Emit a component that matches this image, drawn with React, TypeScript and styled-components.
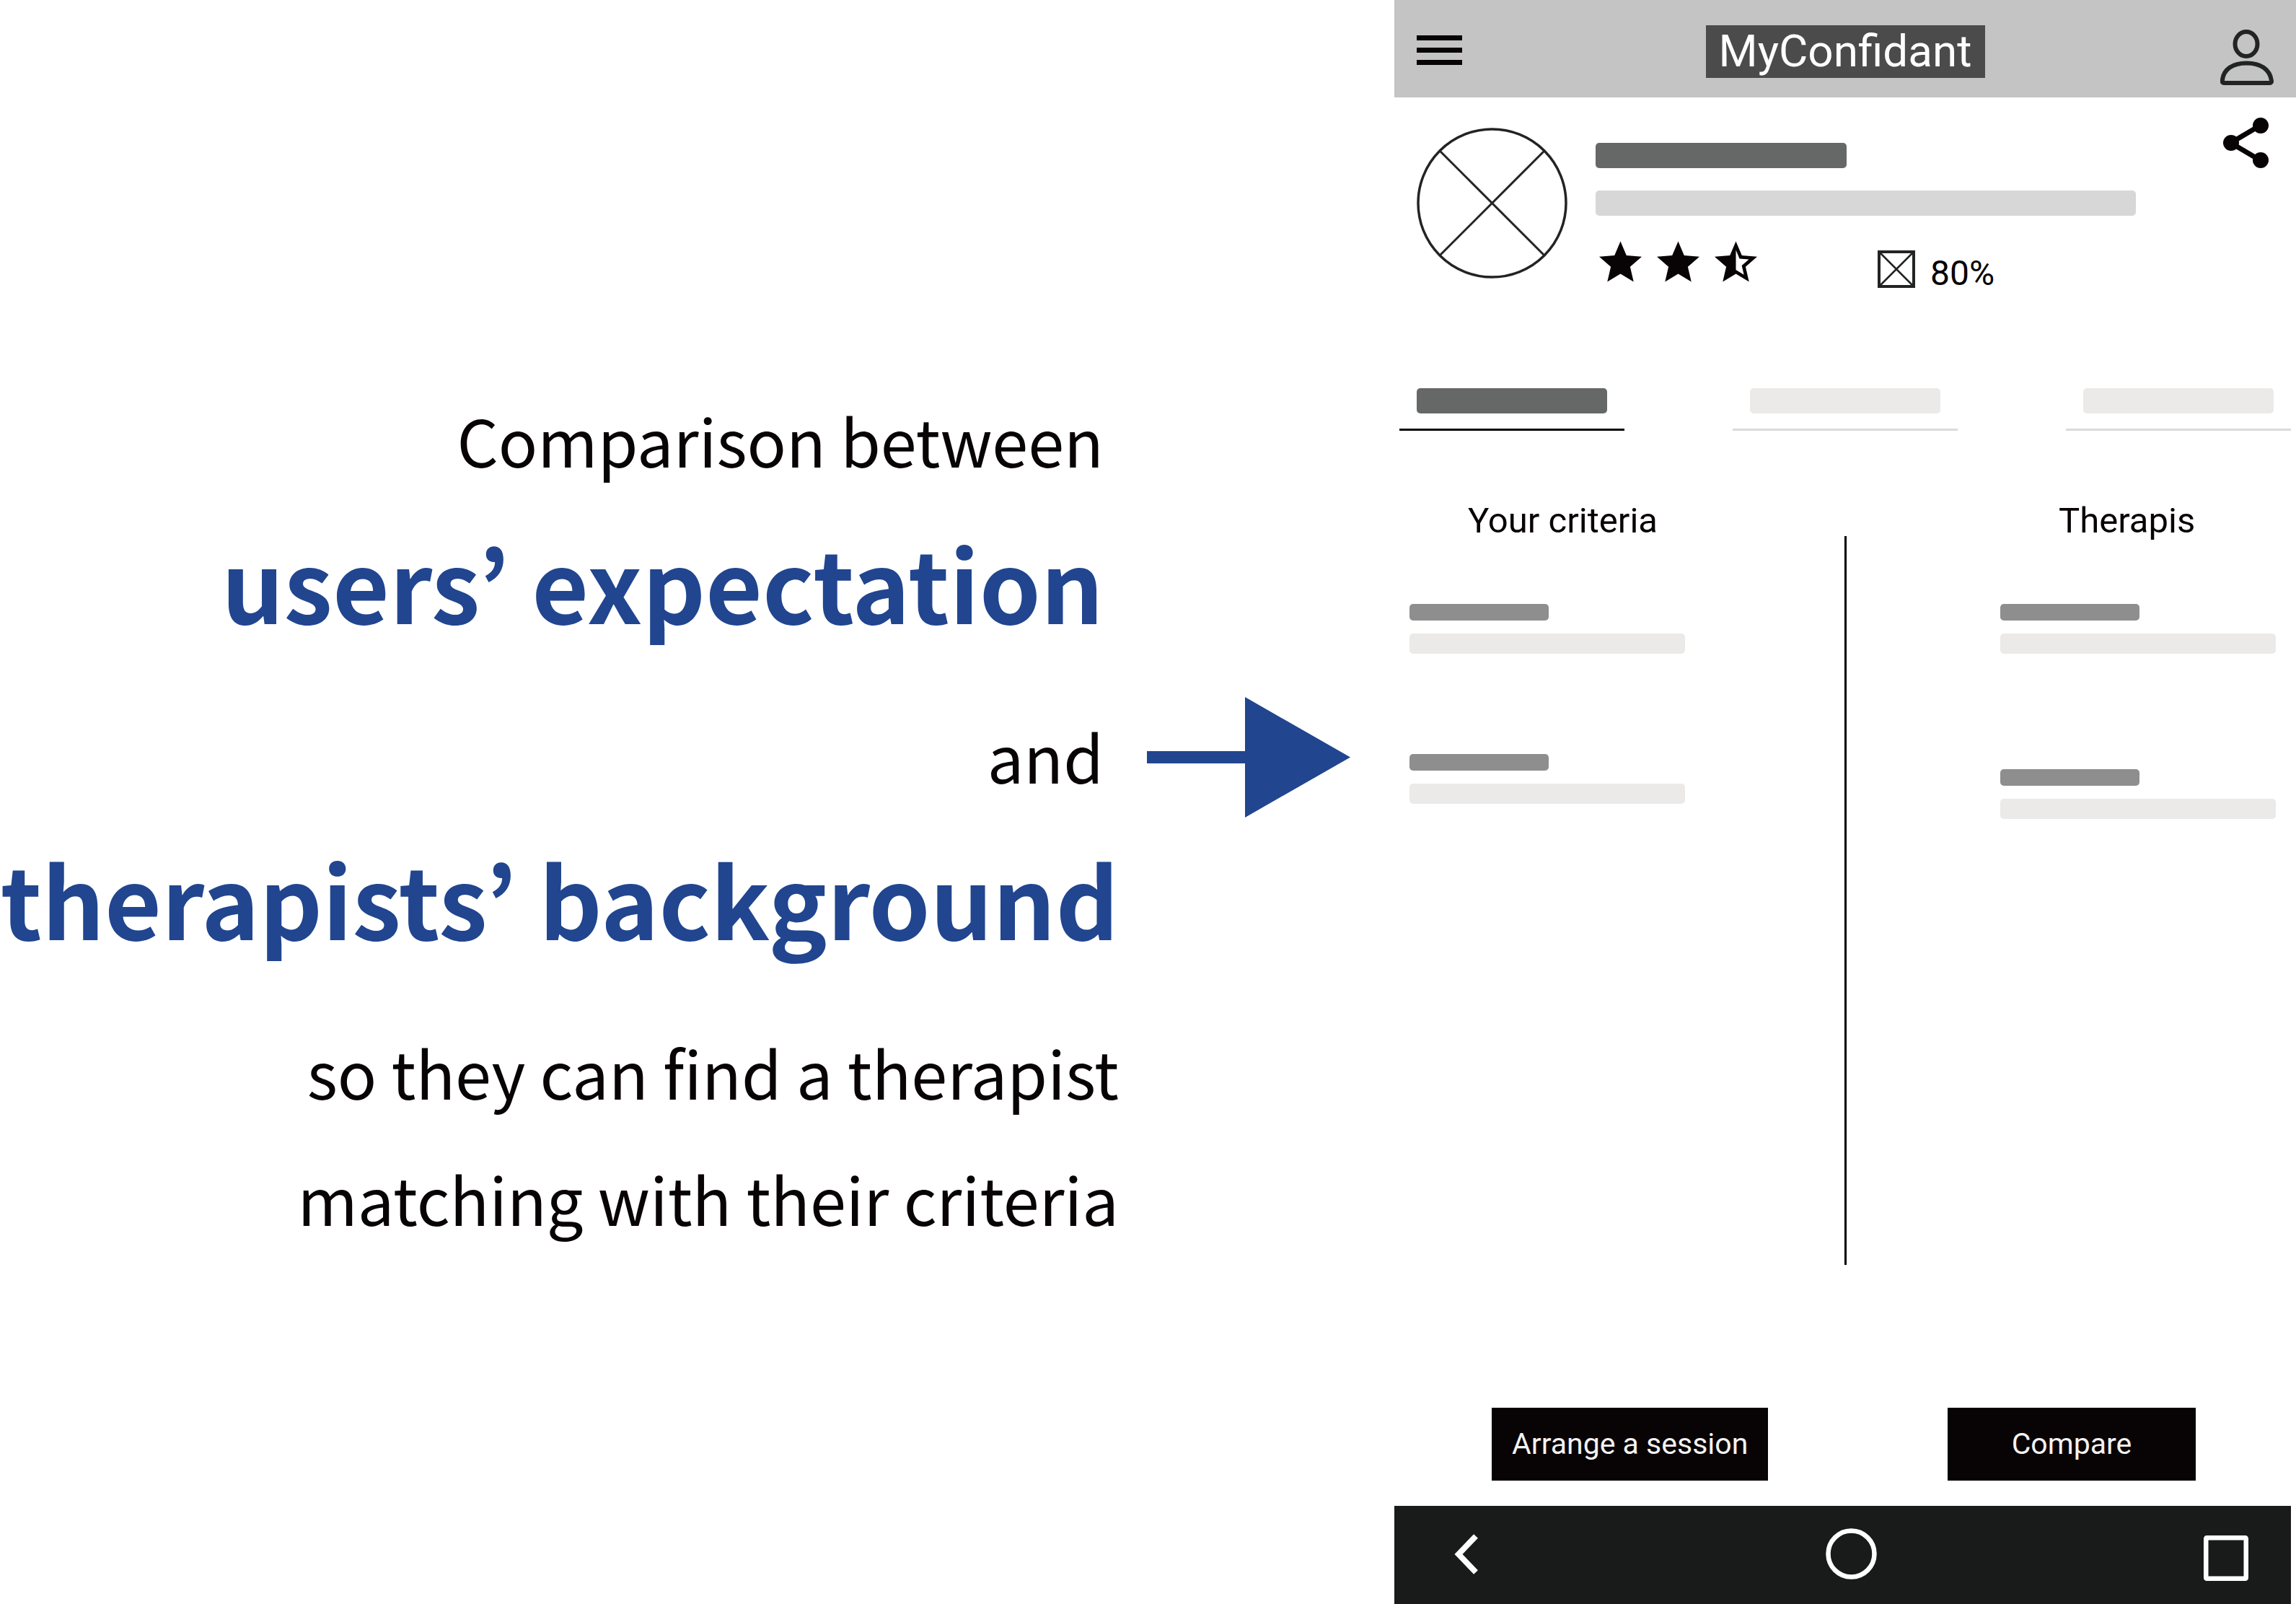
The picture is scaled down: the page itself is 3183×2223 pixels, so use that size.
import React from "react";
import styled, { createGlobalStyle } from "styled-components";

const INK = "#080304";
const BLUE = "#21458f";

const GlobalStyle = createGlobalStyle`
  *, *::before, *::after { box-sizing: border-box; }
  body {
    margin: 0;
    background: #fff;
    color: ${INK};
    font-family: Roboto, "Liberation Sans", sans-serif;
  }
  button {
    margin: 0;
    padding: 0;
    border: 0;
    background: none;
    color: inherit;
    font: inherit;
    cursor: pointer;
  }
  svg { display: block; }
`;

const Page = styled.div`
  display: grid;
  grid-template-columns: minmax(0, 1551fr) minmax(0, 382fr) minmax(0, 1250fr);
  min-height: 100vh;
`;

/* Statement on the left */

const Statement = styled.section`
  padding-top: 522px;
  font-family: "Noto Sans CJK KR", "Noto Sans", sans-serif;
  text-align: right;
  white-space: nowrap;
`;

const Clause = styled.div<{ $inset?: number }>`
  display: flex;
  flex-direction: column;
  align-items: flex-end;
  padding-right: ${({ $inset = 0 }) => $inset}px;
`;

const Line = styled.p`
  margin: 0;
  font-size: 90px;
  line-height: 175px;
`;

const KeyLine = styled.p`
  margin: 0 0 46px;
  color: ${BLUE};
  font-size: 136px;
  font-weight: 700;
  line-height: 217px;
`;

const Pointer = styled.div`
  display: flex;
  justify-content: flex-start;
  padding: 966px 0 0 39px;
`;

/* Phone mock-up */

const Phone = styled.div`
  display: flex;
  flex-direction: column;
`;

const AppBar = styled.header`
  display: grid;
  grid-template-columns: 1fr auto 1fr;
  align-items: center;
  height: 135px;
  padding: 8px 31px 0;
  background: #c4c4c4;
`;

const AppTitle = styled.h1`
  margin: 0;
  padding: 0 18px 2px;
  background: #4b4b4b;
  color: #fff;
  font-size: 62px;
  font-weight: 400;
  line-height: 71px;
`;

const BarButton = styled.button<{ $end?: boolean }>`
  justify-self: ${({ $end }) => ($end ? "end" : "start")};
  padding: ${({ $end }) => ($end ? "16px 0 0" : "0 0 4px")};
`;

const Main = styled.main`
  display: flex;
  flex: 1;
  flex-direction: column;
`;

const Profile = styled.section`
  display: flex;
  align-items: flex-start;
  height: 403px;
  padding: 28px 38px 0 31px;
`;

const Avatar = styled.div`
  flex: none;
  margin: 14px 39px 0 0;
`;

const Details = styled.div`
  flex: 1;
  min-width: 0;
  padding-top: 35px;
`;

const Placeholder = styled.span<{ $width: number; $height: number; $tone: string }>`
  display: block;
  width: ${({ $width }) => $width}px;
  max-width: 100%;
  height: ${({ $height }) => $height}px;
  border-radius: 5px;
  background: ${({ $tone }) => $tone};
`;

const NameBlock = styled.div`
  display: grid;
  gap: 31px;
`;

const Ratings = styled.div`
  display: flex;
  align-items: flex-start;
  gap: 167px;
  padding: 35px 0 0 5px;
`;

const Stars = styled.div`
  display: flex;
  gap: 21px;
`;

const Match = styled.div`
  display: flex;
  align-items: flex-start;
  gap: 21px;
  padding-top: 13px;
  font-size: 48px;
  line-height: 64px;
`;

const Tabs = styled.nav`
  display: flex;
  justify-content: space-between;
  padding: 0 7px;
`;

const Tab = styled.button<{ $active?: boolean }>`
  padding: 0 24px 21px;
  border-bottom: 3px solid ${({ $active }) => ($active ? INK : "#ddd9da")};
`;

const Comparison = styled.section`
  display: grid;
  grid-template-columns: 1fr 3px 1fr;
  align-items: start;
  padding: 97px 0 0;
`;

const Divider = styled.div`
  height: 1010px;
  margin-top: 49px;
  background: #000;
`;

const Column = styled.div<{ $end?: boolean }>`
  justify-self: ${({ $end }) => ($end ? "end" : "start")};
  padding: ${({ $end }) => ($end ? "0 28px 0 0" : "0 0 0 21px")};
`;

const ColumnTitle = styled.h2`
  margin: 0 0 87px;
  padding-left: 81px;
  font-size: 49px;
  font-weight: 400;
  line-height: 56px;
`;

const Criteria = styled.ul<{ $gap: number }>`
  display: grid;
  gap: ${({ $gap }) => $gap}px;
  margin: 0;
  padding: 0;
  list-style: none;
`;

const Criterion = styled.li`
  display: grid;
  gap: 18px;
`;

const Actions = styled.div`
  display: flex;
  justify-content: space-between;
  margin-top: auto;
  padding: 0 139px 35px 135px;
`;

const ActionButton = styled.button`
  min-width: 344px;
  height: 101px;
  padding: 0 28px 2px;
  background: ${INK};
  color: #f2f2f2;
  font-size: 41px;
  line-height: 48px;
`;

const SystemBar = styled.nav`
  display: grid;
  grid-template-columns: 1fr auto 1fr;
  align-items: center;
  height: 136px;
  margin-right: 7px;
  padding: 0 59px 3px 83px;
  background: #191b1a;
`;

const SystemButton = styled.button<{ $side: "start" | "center" | "end" }>`
  justify-self: ${({ $side }) => $side};
  padding-top: ${({ $side }) => ($side === "end" ? "12px" : "0")};
`;

function MenuIcon() {
  return (
    <svg width="63" height="41" viewBox="0 0 63 41" fill={INK} aria-hidden="true">
      <rect width="63" height="7" />
      <rect y="17" width="63" height="7" />
      <rect y="34" width="63" height="7" />
    </svg>
  );
}

function PersonIcon() {
  return (
    <svg width="74" height="78" viewBox="0 0 74 78" fill="none" stroke="#222423" strokeWidth="6" aria-hidden="true">
      <ellipse cx="36" cy="20" rx="15.5" ry="17" />
      <path d="M5 74c-1.500 0-2.500-1-2.200-3C4 55 17 46.500 36.500 46.500S69 55 71 71c.2 2-.7 3-2.200 3z" />
    </svg>
  );
}

function ShareIcon() {
  return (
    <svg width="63" height="70" viewBox="0 0 63 70" fill={INK} aria-hidden="true">
      <path d="M52 10.500L10.500 35 52 59.500" fill="none" stroke={INK} strokeWidth="7" />
      <circle cx="52" cy="11" r="11" />
      <circle cx="11" cy="35" r="11" />
      <circle cx="52" cy="59" r="11" />
    </svg>
  );
}

function CrossedCircle() {
  return (
    <svg width="209" height="209" viewBox="0 0 209 209" fill="none" stroke="#222423" strokeWidth="3.500" aria-hidden="true">
      <circle cx="104.500" cy="104.500" r="102.500" />
      <path d="M32 32l145 145M177 32L32 177" strokeWidth="3" />
    </svg>
  );
}

function CrossedSquare() {
  return (
    <svg width="52" height="52" viewBox="0 0 52 52" fill="none" stroke="#222423" aria-hidden="true">
      <rect x="2" y="2" width="48" height="48" strokeWidth="4" />
      <path d="M3 3l46 46M49 3L3 49" strokeWidth="2.500" />
    </svg>
  );
}

function Star({ half = false }: { half?: boolean }) {
  return (
    <svg width="59" height="57" viewBox="2 2 20 19" fill={INK} aria-hidden="true">
      <path
        d={
          half
            ? "M22 9.240l-7.190-.62L12 2 9.190 8.630 2 9.240l5.460 4.730L5.820 21 12 17.270 18.180 21l-1.630-7.030L22 9.240zM12 15.400V6.100l1.710 4.040 4.380.38-3.320 2.880 1 4.280L12 15.400z"
            : "M12 17.270L18.180 21l-1.640-7.030L22 9.240l-7.190-.61L12 2 9.190 8.630 2 9.240l5.460 4.730L5.820 21z"
        }
      />
    </svg>
  );
}

function ArrowRight() {
  return (
    <svg width="282" height="167" viewBox="0 0 282 167" fill={BLUE} aria-hidden="true">
      <path d="M0 75h136V0l146 83.500L136 167V92H0z" />
    </svg>
  );
}

function CriteriaList({ gap }: { gap: number }) {
  return (
    <Criteria $gap={gap}>
      {[0, 1].map((row) => (
        <Criterion key={row}>
          <Placeholder $width={193} $height={23} $tone="#8e8e8e" />
          <Placeholder $width={382} $height={28} $tone="#ebeae9" />
        </Criterion>
      ))}
    </Criteria>
  );
}

export default function App() {
  return (
    <>
      <GlobalStyle />
      <Page>
        <Statement>
          <Clause $inset={21}>
            <Line>Comparison between</Line>
            <KeyLine>users’ expectation</KeyLine>
            <Line>and</Line>
          </Clause>
          <Clause>
            <KeyLine>therapists’ background</KeyLine>
            <Line>so they can find a therapist</Line>
            <Line>matching with their criteria</Line>
          </Clause>
        </Statement>

        <Pointer>
          <ArrowRight />
        </Pointer>

        <Phone>
          <AppBar>
            <BarButton aria-label="Menu">
              <MenuIcon />
            </BarButton>
            <AppTitle>MyConfidant</AppTitle>
            <BarButton $end aria-label="Account">
              <PersonIcon />
            </BarButton>
          </AppBar>

          <Main>
            <Profile>
              <Avatar>
                <CrossedCircle />
              </Avatar>
              <Details>
                <NameBlock>
                  <Placeholder $width={348} $height={35} $tone="#666867" />
                  <Placeholder $width={749} $height={35} $tone="#d7d7d7" />
                </NameBlock>
                <Ratings>
                  <Stars role="img" aria-label="Rating">
                    <Star />
                    <Star />
                    <Star half />
                  </Stars>
                  <Match>
                    <CrossedSquare />
                    <span>80%</span>
                  </Match>
                </Ratings>
              </Details>
              <button aria-label="Share">
                <ShareIcon />
              </button>
            </Profile>

            <Tabs>
              {[true, false, false].map((active, index) => (
                <Tab key={index} $active={active} aria-label={`Tab ${index + 1}`}>
                  <Placeholder $width={264} $height={35} $tone={active ? "#666867" : "#ebeae9"} />
                </Tab>
              ))}
            </Tabs>

            <Comparison>
              <Column>
                <ColumnTitle>Your criteria</ColumnTitle>
                <CriteriaList gap={139} />
              </Column>
              <Divider />
              <Column $end>
                <ColumnTitle>Therapis</ColumnTitle>
                <CriteriaList gap={160} />
              </Column>
            </Comparison>

            <Actions>
              <ActionButton>Arrange a session</ActionButton>
              <ActionButton>Compare</ActionButton>
            </Actions>
          </Main>

          <SystemBar>
            <SystemButton $side="start" aria-label="Back">
              <svg width="34" height="56" viewBox="0 0 34 56" fill="none" stroke="#fff" strokeWidth="8" aria-hidden="true">
                <path d="M30 3L6 28l24 25" />
              </svg>
            </SystemButton>
            <SystemButton $side="center" aria-label="Home">
              <svg width="71" height="71" viewBox="0 0 71 71" fill="none" stroke="#fff" strokeWidth="6.500" aria-hidden="true">
                <circle cx="35.500" cy="35.500" r="32" />
              </svg>
            </SystemButton>
            <SystemButton $side="end" aria-label="Recent apps">
              <svg width="62" height="63" viewBox="0 0 62 63" fill="none" stroke="#fff" strokeWidth="6.500" aria-hidden="true">
                <rect x="3.250" y="3.250" width="55.500" height="56.500" rx="1" />
              </svg>
            </SystemButton>
          </SystemBar>
        </Phone>
      </Page>
    </>
  );
}
